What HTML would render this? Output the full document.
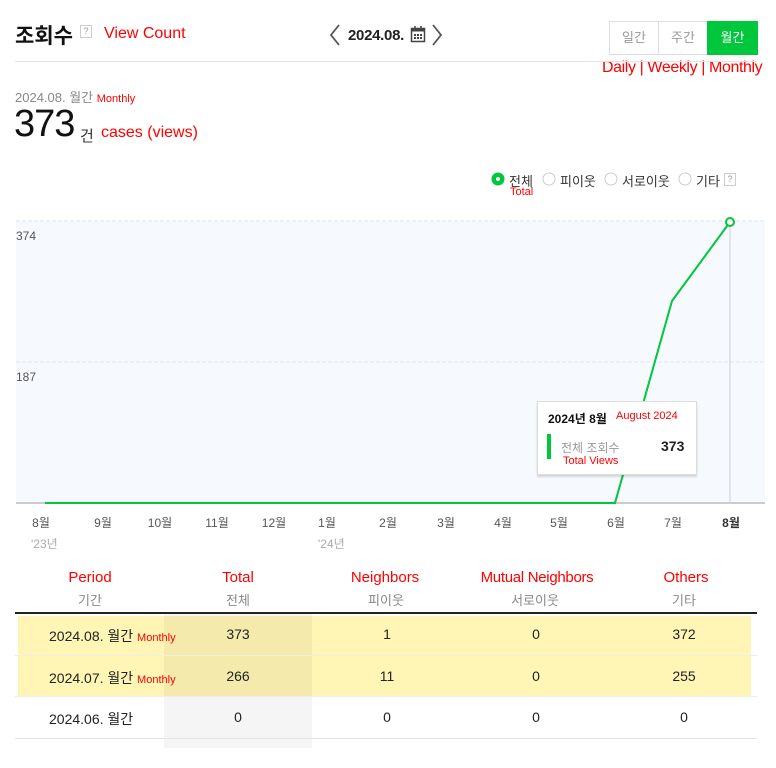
<!DOCTYPE html>
<html><head><meta charset="utf-8"><style>
*{margin:0;padding:0;box-sizing:border-box}
body{width:776px;height:768px;background:#fff;position:relative;font-family:"Liberation Sans","Noto Sans CJK KR",sans-serif;overflow:hidden;color:#222}
.a{position:absolute;white-space:nowrap}
.r{color:#f00}
.c{transform:translateX(-50%)}
.ml{font-size:12px;color:#555;top:514px}
</style></head><body>
<div class="a" style="left:15px;top:20px;font-size:21px;font-weight:bold;color:#111">조회수</div>
<div class="a" style="left:80px;top:25px;width:12px;height:13px;border:1px solid #ccc;font-size:9px;color:#999;text-align:center;line-height:11px">?</div>
<div class="a r" style="left:104px;top:25px;font-size:16px">View Count</div>
<svg class="a" style="left:328px;top:23px" width="14" height="24"><path d="M11 2 L3 12 L11 22" fill="none" stroke="#555" stroke-width="1.8"/></svg>
<div class="a" style="left:348px;top:27px;font-size:15px;font-weight:bold;color:#222;letter-spacing:-0.3px">2024.08.</div>
<svg class="a" style="left:410px;top:25px" width="16" height="18"><rect x="1.5" y="3.5" width="13" height="13" fill="none" stroke="#444" stroke-width="1.5"/><rect x="1.5" y="3.5" width="13" height="3" fill="#444"/><path d="M5 1v4M11 1v4" stroke="#444" stroke-width="1.5"/><g fill="#444"><rect x="4" y="9" width="2" height="2"/><rect x="7" y="9" width="2" height="2"/><rect x="10" y="9" width="2" height="2"/><rect x="4" y="12" width="2" height="2"/><rect x="7" y="12" width="2" height="2"/><rect x="10" y="12" width="2" height="2"/></g></svg>
<svg class="a" style="left:430px;top:23px" width="14" height="24"><path d="M3 2 L11 12 L3 22" fill="none" stroke="#555" stroke-width="1.8"/></svg>
<div class="a" style="left:609px;top:21px;width:50px;height:34px;border:1px solid #ddd;font-size:13px;color:#999;text-align:center;line-height:32px">일간</div>
<div class="a" style="left:658px;top:21px;width:50px;height:34px;border:1px solid #ddd;font-size:13px;color:#999;text-align:center;line-height:32px">주간</div>
<div class="a" style="left:707px;top:21px;width:51px;height:34px;background:#00c73c;font-size:13px;color:#fff;text-align:center;line-height:34px">월간</div>
<div class="a r" style="left:602px;top:59px;font-size:16px;letter-spacing:-0.4px">Daily | Weekly | Monthly</div>
<div class="a" style="left:15px;top:61px;width:742px;height:1px;background:#e4e4e4"></div>
<div class="a" style="left:15px;top:87px;font-size:13px;color:#888">2024.08. 월간 <span class="r" style="font-size:11px">Monthly</span></div>
<div class="a" style="left:14px;top:103px;font-size:38px;color:#111;letter-spacing:-1px">373</div>
<div class="a" style="left:80px;top:125px;font-size:15px;color:#333">건</div>
<div class="a r" style="left:101px;top:124px;font-size:16px">cases (views)</div>
<svg class="a" style="left:491px;top:172px" width="14" height="14"><circle cx="7" cy="7" r="6.5" fill="#00c73c"/><circle cx="7" cy="7" r="2" fill="#fff"/></svg>
<div class="a" style="left:509px;top:171px;font-size:13px;color:#333">전체</div>
<div class="a r" style="left:510px;top:186px;font-size:11px">Total</div>
<svg class="a" style="left:542px;top:172px" width="14" height="14"><circle cx="7" cy="7" r="6" fill="#fff" stroke="#ccc"/></svg>
<div class="a" style="left:560px;top:171px;font-size:13px;color:#333">피이웃</div>
<svg class="a" style="left:604px;top:172px" width="14" height="14"><circle cx="7" cy="7" r="6" fill="#fff" stroke="#ccc"/></svg>
<div class="a" style="left:622px;top:171px;font-size:13px;color:#333">서로이웃</div>
<svg class="a" style="left:678px;top:172px" width="14" height="14"><circle cx="7" cy="7" r="6" fill="#fff" stroke="#ccc"/></svg>
<div class="a" style="left:696px;top:171px;font-size:13px;color:#333">기타</div>
<div class="a" style="left:724px;top:173px;width:12px;height:13px;border:1px solid #ccc;font-size:9px;color:#999;text-align:center;line-height:11px">?</div>

<svg class="a" style="left:0;top:210px" width="776" height="300">
<rect x="16" y="11" width="749" height="283" fill="#f6fafe"/>
<line x1="16" y1="11" x2="765" y2="11" stroke="#dde6ee" stroke-dasharray="4,2"/>
<line x1="16" y1="152" x2="765" y2="152" stroke="#dde6ee" stroke-dasharray="4,2"/>
<line x1="16" y1="293" x2="765" y2="293" stroke="#ccc" stroke-width="2"/>
<line x1="730" y1="12" x2="730" y2="293" stroke="#ccd" stroke-width="1"/>
<polyline points="45,293 615,293 672,91 730,12" fill="none" stroke="#00c73c" stroke-width="2"/>
<circle cx="730" cy="12" r="4" fill="#fff" stroke="#00c73c" stroke-width="2"/>
<text x="16" y="30" font-size="12" fill="#555" font-family="Liberation Sans">374</text>
<text x="16" y="171" font-size="12" fill="#555" font-family="Liberation Sans">187</text>
</svg>
<div class="a" style="left:537px;top:401px;width:160px;height:74px;background:#fff;border:1px solid #ddd;box-shadow:0 2px 2px rgba(0,0,0,.15)"></div>
<div class="a" style="left:548px;top:410px;font-size:12px;font-weight:bold;color:#111">2024년 8월</div>
<div class="a r" style="left:616px;top:410px;font-size:11px">August 2024</div>
<div class="a" style="left:547px;top:434px;width:4px;height:25px;background:#00c73c"></div>
<div class="a" style="left:561px;top:439px;font-size:12px;color:#999">전체 조회수</div>
<div class="a r" style="left:563px;top:455px;font-size:11px">Total Views</div>
<div class="a" style="left:661px;top:438px;font-size:14px;font-weight:bold;color:#222">373</div>

<div class="a c ml" style="left:41px">8월</div>
<div class="a c ml" style="left:103px">9월</div>
<div class="a c ml" style="left:160px">10월</div>
<div class="a c ml" style="left:217px">11월</div>
<div class="a c ml" style="left:274px">12월</div>
<div class="a c ml" style="left:327px">1월</div>
<div class="a c ml" style="left:388px">2월</div>
<div class="a c ml" style="left:446px">3월</div>
<div class="a c ml" style="left:503px">4월</div>
<div class="a c ml" style="left:559px">5월</div>
<div class="a c ml" style="left:616px">6월</div>
<div class="a c ml" style="left:673px">7월</div>
<div class="a c ml" style="left:731px;font-weight:bold;color:#333">8월</div>
<div class="a" style="left:31px;top:535px;font-size:12px;color:#aaa">'23년</div>
<div class="a" style="left:318px;top:535px;font-size:12px;color:#aaa">'24년</div>

<div class="a" style="left:164px;top:614px;width:148px;height:134px;background:#f5f5f5"></div>
<div class="a" style="left:18px;top:616px;width:733px;height:80px;background:#fff3a8;opacity:.85"></div>
<div class="a" style="left:164px;top:616px;width:148px;height:80px;background:rgba(0,0,0,.04)"></div>
<div class="a" style="left:15px;top:612px;width:742px;height:2px;background:#222"></div>
<div class="a" style="left:15px;top:655px;width:742px;height:1px;background:#eee"></div>
<div class="a" style="left:15px;top:696px;width:742px;height:1px;background:#eee"></div>
<div class="a" style="left:15px;top:738px;width:742px;height:1px;background:#e4e4e4"></div>

<div class="a c r" style="left:90px;top:569px;font-size:15px">Period</div>
<div class="a c r" style="left:238px;top:569px;font-size:15px">Total</div>
<div class="a c r" style="left:385px;top:569px;font-size:15px">Neighbors</div>
<div class="a c r" style="left:537px;top:569px;font-size:15px;letter-spacing:-0.3px">Mutual Neighbors</div>
<div class="a c r" style="left:686px;top:569px;font-size:15px">Others</div>
<div class="a c" style="left:90px;top:590px;font-size:13px;color:#888">기간</div>
<div class="a c" style="left:238px;top:590px;font-size:13px;color:#888">전체</div>
<div class="a c" style="left:386px;top:590px;font-size:13px;color:#888">피이웃</div>
<div class="a c" style="left:535px;top:590px;font-size:13px;color:#888">서로이웃</div>
<div class="a c" style="left:684px;top:590px;font-size:13px;color:#888">기타</div>

<div class="a" style="left:49px;top:626px;font-size:14px;color:#222">2024.08. 월간 <span class="r" style="font-size:11px">Monthly</span></div>
<div class="a c" style="left:238px;top:626px;font-size:14px">373</div>
<div class="a c" style="left:387px;top:626px;font-size:14px">1</div>
<div class="a c" style="left:536px;top:626px;font-size:14px">0</div>
<div class="a c" style="left:684px;top:626px;font-size:14px">372</div>
<div class="a" style="left:49px;top:668px;font-size:14px;color:#222">2024.07. 월간 <span class="r" style="font-size:11px">Monthly</span></div>
<div class="a c" style="left:238px;top:668px;font-size:14px">266</div>
<div class="a c" style="left:387px;top:668px;font-size:14px">11</div>
<div class="a c" style="left:536px;top:668px;font-size:14px">0</div>
<div class="a c" style="left:684px;top:668px;font-size:14px">255</div>
<div class="a" style="left:49px;top:709px;font-size:14px;color:#222">2024.06. 월간</div>
<div class="a c" style="left:238px;top:709px;font-size:14px">0</div>
<div class="a c" style="left:387px;top:709px;font-size:14px">0</div>
<div class="a c" style="left:536px;top:709px;font-size:14px">0</div>
<div class="a c" style="left:684px;top:709px;font-size:14px">0</div>
</body></html>
